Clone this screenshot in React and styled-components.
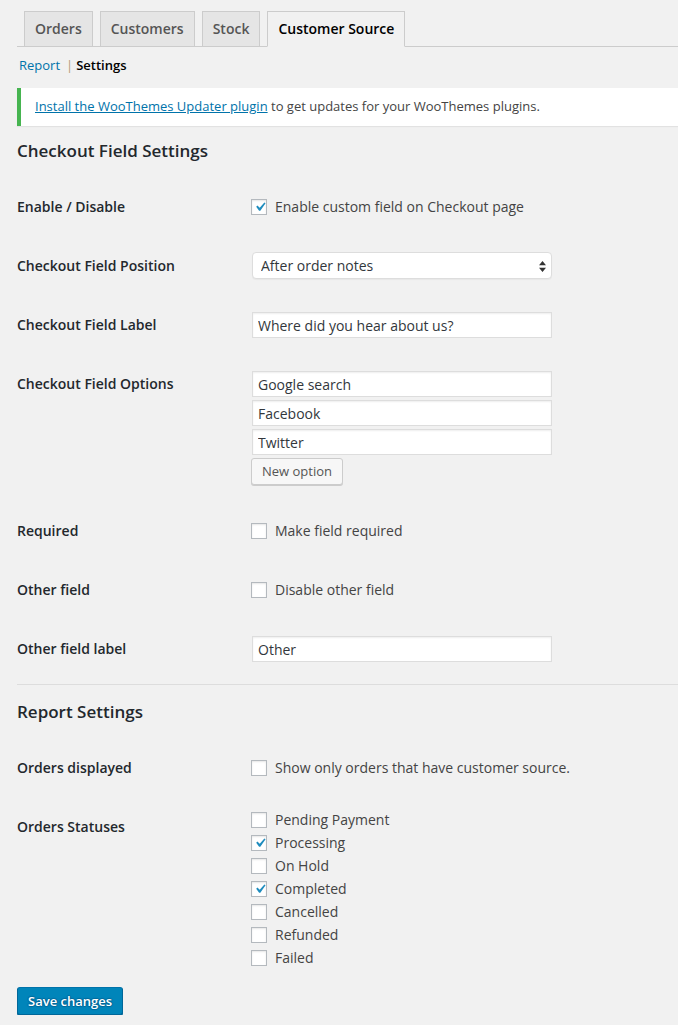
import React from 'react';
import styled, {createGlobalStyle} from 'styled-components';

const GlobalStyle = createGlobalStyle`
    html, body {
        margin: 0;
        padding: 0;
        background: #f1f1f1;
        font-family: 'Open Sans', 'Liberation Sans', sans-serif;
        color: #444;
        font-size: 13px;
        overflow-x: hidden;
    }
    * { box-sizing: border-box; }
`;

const Wrap = styled.div`
    padding: 11px 0 0 17px;
    width: 700px;
`;

const TabBar = styled.nav`
    display: flex;
    gap: 7px;
    padding-left: 7px;
    border-bottom: 1px solid #ccc;
`;

const Tab = styled.a`
    display: block;
    margin-bottom: -1px;
    padding: 5px 10px;
    font-size: 14px;
    line-height: 24px;
    font-weight: 600;
    border: 1px solid #ccc;
    border-bottom: 1px solid ${p => (p.$active ? '#f1f1f1' : '#ccc')};
    background: ${p => (p.$active ? '#f1f1f1' : '#e5e5e5')};
    color: ${p => (p.$active ? '#000' : '#555')};
    text-decoration: none;
`;

const SubNav = styled.div`
    margin: 8px 0 0 2px;
    line-height: 20px;
    font-size: 13px;
`;

const SubLink = styled.a`
    color: #0073aa;
    text-decoration: none;
`;

const Sep = styled.span`
    color: #b59a77;
    margin: 0 3px 0 6px;
`;

const Current = styled.span`
    color: #000;
    font-weight: 600;
`;

const Notice = styled.div`
    margin: 13px 0 13px;
    background: #fff;
    border-left: 4px solid #46b450;
    box-shadow: 0 1px 1px rgba(0, 0, 0, 0.06);
    padding: 9px 14px 11px;
    font-size: 13px;
    line-height: 18px;
    color: #444;
`;

const NoticeLink = styled.a`
    color: #0073aa;
    text-decoration: underline;
`;

const Heading = styled.h3`
    margin: 0 0 15px;
    font-size: 17px;
    line-height: 24px;
    font-weight: 600;
    color: #23282d;
`;

const Row = styled.div`
    display: grid;
    grid-template-columns: 234px 1fr;
`;

const Label = styled.div`
    padding: 20px 0 21px;
    font-size: 14px;
    line-height: 18px;
    font-weight: 600;
    color: #23282d;
`;

const Field = styled.div`
    padding: ${p => p.$pad || '15px'} 0 ${p => p.$padBottom || '15px'};
    font-size: 14px;
    line-height: 18px;
    display: flex;
    flex-direction: column;
    align-items: flex-start;
    gap: 1px;
`;

const TextInput = styled.input`
    width: 300px;
    height: 26px;
    margin: 1px 0 1px 1px;
    padding: 2px 5px;
    border: 1px solid #ddd;
    box-shadow: inset 0 1px 2px rgba(0, 0, 0, 0.07);
    background: #fff;
    font-family: 'Open Sans', 'Liberation Sans', sans-serif;
    font-size: 14px;
    color: #32373c;
    outline: none;
`;

const SelectWrap = styled.div`
    position: relative;
    width: 300px;
    margin-left: 1px;
`;

const Select = styled.select`
    appearance: none;
    -webkit-appearance: none;
    width: 300px;
    height: 27px;
    padding: 2px 8px;
    border: 1px solid #ddd;
    border-radius: 4px;
    background: #fff;
    box-shadow: 0 1px 1px rgba(0, 0, 0, 0.04);
    font-family: 'Open Sans', 'Liberation Sans', sans-serif;
    font-size: 14px;
    color: #32373c;
    outline: none;
`;

const Arrows = styled.svg`
    position: absolute;
    right: 6px;
    top: 9px;
    pointer-events: none;
`;

const Button = styled.button`
    height: 27px;
    margin-top: 1px;
    padding: 0 10px 1px;
    border: 1px solid #ccc;
    border-radius: 3px;
    background: #f7f7f7;
    box-shadow: 0 1px 0 #ccc;
    font-family: 'Open Sans', 'Liberation Sans', sans-serif;
    font-size: 13px;
    color: #555;
    cursor: pointer;
`;

const PrimaryButton = styled.button`
    height: 28px;
    padding: 0 10px 1px;
    border: 1px solid #0073aa;
    border-color: #0073aa #006799 #006799;
    border-radius: 3px;
    background: #0085ba;
    box-shadow: 0 1px 0 #006799;
    text-shadow: 0 -1px 1px #006799, 1px 0 1px #006799, 0 1px 1px #006799, -1px 0 1px #006799;
    font-family: 'Open Sans', 'Liberation Sans', sans-serif;
    font-size: 13px;
    font-weight: 600;
    color: #fff;
    cursor: pointer;
`;

const CheckLine = styled.label`
    display: flex;
    align-items: center;
    gap: 8px;
    height: ${p => p.$h || '18px'};
    font-size: 14px;
    color: #444;
`;

const Box = styled.span`
    position: relative;
    width: 16px;
    height: 16px;
    flex: none;
    border: 1px solid #b4b9be;
    background: #fff;
    box-shadow: inset 0 1px 2px rgba(0, 0, 0, 0.1);
`;

const Tick = styled.svg`
    position: absolute;
    left: -1px;
    top: -2px;
`;

const Divider = styled.hr`
    margin: 5px 0 15px;
    border: 0;
    border-top: 1px solid #ddd;
`;

const StatusList = styled.div`
    padding: 10px 0 15px;
    display: flex;
    flex-direction: column;
`;

const Submit = styled.div`
    padding-top: 3px;
`;

const Checkbox = ({checked, children, h}) => (
    <CheckLine $h={h}>
        <Box>
            {checked && (
                <Tick width="18" height="18" viewBox="0 0 20 20">
                    <path fill="#1e8cbe" d="M14.83 4.89l1.34.94-5.81 8.38H9.02L5.78 9.67l1.34-1.25 2.57 2.4z" />
                </Tick>
            )}
        </Box>
        {children}
    </CheckLine>
);

const statuses = [
    ['Pending Payment', false],
    ['Processing', true],
    ['On Hold', false],
    ['Completed', true],
    ['Cancelled', false],
    ['Refunded', false],
    ['Failed', false]
];

const App = () => (
    <>
        <GlobalStyle />
        <Wrap>
            <TabBar>
                <Tab>{'Orders'}</Tab>
                <Tab>{'Customers'}</Tab>
                <Tab>{'Stock'}</Tab>
                <Tab $active>{'Customer Source'}</Tab>
            </TabBar>
            <SubNav>
                <SubLink>{'Report'}</SubLink>
                <Sep>{'|'}</Sep>
                <Current>{'Settings'}</Current>
            </SubNav>
            <Notice>
                <NoticeLink>{'Install the WooThemes Updater plugin'}</NoticeLink>
                {' to get updates for your WooThemes plugins.'}
            </Notice>

            <Heading>{'Checkout Field Settings'}</Heading>
            <Row>
                <Label>{'Enable / Disable'}</Label>
                <Field $pad="20px">
                    <Checkbox checked>{'Enable custom field on Checkout page'}</Checkbox>
                </Field>
            </Row>
            <Row>
                <Label>{'Checkout Field Position'}</Label>
                <Field>
                    <SelectWrap>
                        <Select defaultValue="after">
                            <option value="after">{'After order notes'}</option>
                        </Select>
                        <Arrows width="7" height="11" viewBox="0 0 7 11">
                            <path fill="#333" d="M3.5 0L7 4.2H0z M0 6.8h7L3.5 11z" />
                        </Arrows>
                    </SelectWrap>
                </Field>
            </Row>
            <Row>
                <Label>{'Checkout Field Label'}</Label>
                <Field>
                    <TextInput defaultValue="Where did you hear about us?" />
                </Field>
            </Row>
            <Row>
                <Label>{'Checkout Field Options'}</Label>
                <Field $padBottom="17px">
                    <TextInput defaultValue="Google search" />
                    <TextInput defaultValue="Facebook" />
                    <TextInput defaultValue="Twitter" />
                    <Button>{'New option'}</Button>
                </Field>
            </Row>
            <Row>
                <Label>{'Required'}</Label>
                <Field $pad="20px">
                    <Checkbox>{'Make field required'}</Checkbox>
                </Field>
            </Row>
            <Row>
                <Label>{'Other field'}</Label>
                <Field $pad="20px">
                    <Checkbox>{'Disable other field'}</Checkbox>
                </Field>
            </Row>
            <Row>
                <Label>{'Other field label'}</Label>
                <Field>
                    <TextInput defaultValue="Other" />
                </Field>
            </Row>

            <Divider />

            <Heading>{'Report Settings'}</Heading>
            <Row>
                <Label>{'Orders displayed'}</Label>
                <Field $pad="20px">
                    <Checkbox>{'Show only orders that have customer source.'}</Checkbox>
                </Field>
            </Row>
            <Row>
                <Label>{'Orders Statuses'}</Label>
                <StatusList>
                    {statuses.map(([name, on]) => (
                        <Checkbox key={name} checked={on} h="23px">
                            {name}
                        </Checkbox>
                    ))}
                </StatusList>
            </Row>
            <Submit>
                <PrimaryButton>{'Save changes'}</PrimaryButton>
            </Submit>
        </Wrap>
    </>
);

export default App;
